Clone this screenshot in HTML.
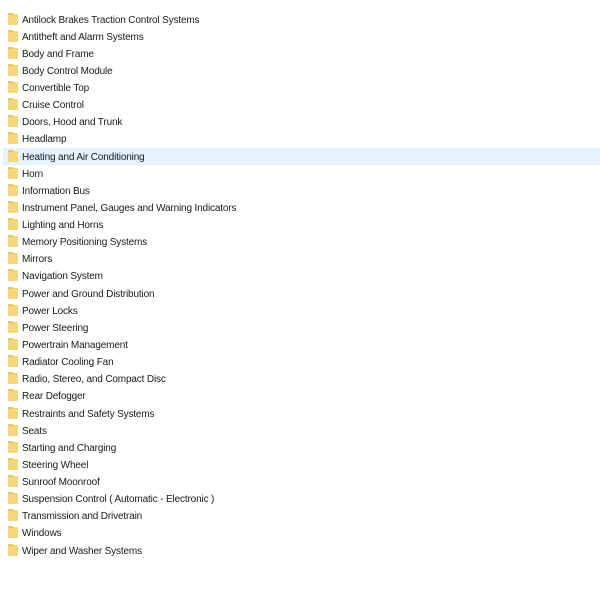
<!DOCTYPE html><html><head><style>
body{margin:0;width:600px;height:590px;background:#fff;font-family:"Liberation Sans",sans-serif;font-size:10px;letter-spacing:-0.15px;color:#1a1a1a;position:relative;overflow:hidden}
.r{position:absolute;left:3px;width:597px;height:17px;line-height:17px}
.r.s{background:#e5f3ff}
.f{position:absolute;left:5px;top:3px;width:10px;height:11px;background:#f5d77a;border-radius:1px}
.f:before{content:"";position:absolute;left:0;top:-1px;width:5px;height:2px;background:#e8c25a;border-radius:1px 1px 0 0}
.t{position:absolute;left:19px;top:1px}
</style></head><body>
<div id="c"></div>
<script>
var a=["Antilock Brakes Traction Control Systems","Antitheft and Alarm Systems","Body and Frame","Body Control Module","Convertible Top","Cruise Control","Doors, Hood and Trunk","Headlamp","Heating and Air Conditioning","Horn","Information Bus","Instrument Panel, Gauges and Warning Indicators","Lighting and Horns","Memory Positioning Systems","Mirrors","Navigation System","Power and Ground Distribution","Power Locks","Power Steering","Powertrain Management","Radiator Cooling Fan","Radio, Stereo, and Compact Disc","Rear Defogger","Restraints and Safety Systems","Seats","Starting and Charging","Steering Wheel","Sunroof Moonroof","Suspension Control ( Automatic - Electronic )","Transmission and Drivetrain","Windows","Wiper and Washer Systems"];
var h="";a.forEach(function(t,i){h+='<div class="r'+(i==8?' s':'')+'" style="top:'+(10.5+i*17.13).toFixed(1)+'px"><div class="f"></div><span class="t">'+t+'</span></div>'});
document.getElementById("c").innerHTML=h;
</script>
</body></html>
